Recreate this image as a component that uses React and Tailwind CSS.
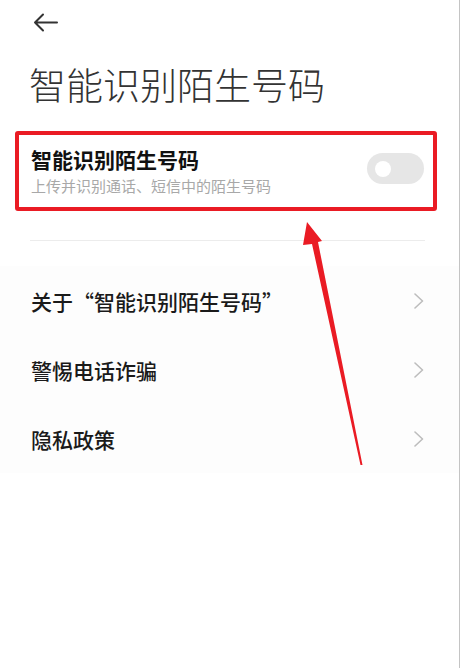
import React from 'react';

const font = { fontFamily: '"Noto Sans CJK SC", "Noto Sans", sans-serif' };

function Chevron() {
  return (
    <svg width="10" height="16" viewBox="0 0 10 16" fill="none">
      <path d="M1 1l7.5 7-7.5 7" stroke="#bdbdbd" strokeWidth="1.6" strokeLinecap="round" strokeLinejoin="round" />
    </svg>
  );
}

function Row({ label }) {
  return (
    <div className="h-[69px] flex items-center justify-between pl-[31px] pr-[35px]">
      <span className="text-[21px] leading-[28px] font-medium text-[#1a1a1a]">{label}</span>
      <Chevron />
    </div>
  );
}

export default function App() {
  return (
    <div className="relative w-[463px] h-[668px] bg-white overflow-hidden" style={font}>
      <div className="w-[460px] h-full border-r-[1.5px] border-[#c4c4c4]">
        <div className="h-[44px] flex items-center pl-[33px]">
          <svg width="25" height="19" viewBox="0 0 25 19" fill="none">
            <path d="M24 9.5H2M10 1.5L2 9.5l8 8" stroke="#333" strokeWidth="2" strokeLinecap="round" strokeLinejoin="round" />
          </svg>
        </div>

        <h1 className="mt-[22px] pl-[29px] text-[37px] leading-[37px] font-light text-[#333]">智能识别陌生号码</h1>

        <div className="mt-[28px] mx-[15px] w-[422px] h-[80px] border-4 border-[#ea1b24] rounded-[3px] flex justify-between pl-[12px] pr-[9px]">
          <div className="pt-[11px]">
            <div className="text-[21px] leading-[26px] font-semibold text-[#111]">智能识别陌生号码</div>
            <div className="mt-[4px] text-[15px] leading-[20px] text-[#a8a8a8]">上传并识别通话、短信中的陌生号码</div>
          </div>
          <div className="mt-[18px] w-[57px] h-[31px] rounded-full bg-[#e6e6e6] flex items-center pl-[8px]">
            <div className="w-[16px] h-[16px] rounded-full bg-white" />
          </div>
        </div>

        <div className="mt-[29px] ml-[30px] w-[395px] h-px bg-[#ececec]" />

        <div className="mt-[25px] bg-[#fdfdfd]">
          <Row label="关于“智能识别陌生号码”" />
          <Row label="警惕电话诈骗" />
          <Row label="隐私政策" />
        </div>
      </div>

      <svg className="absolute inset-0 pointer-events-none" width="463" height="668" viewBox="0 0 463 668">
        <polygon points="307,222 322,241 318,242 362.5,465 360.5,465 312,244 303,245" fill="#ea1b24" />
      </svg>
    </div>
  );
}
